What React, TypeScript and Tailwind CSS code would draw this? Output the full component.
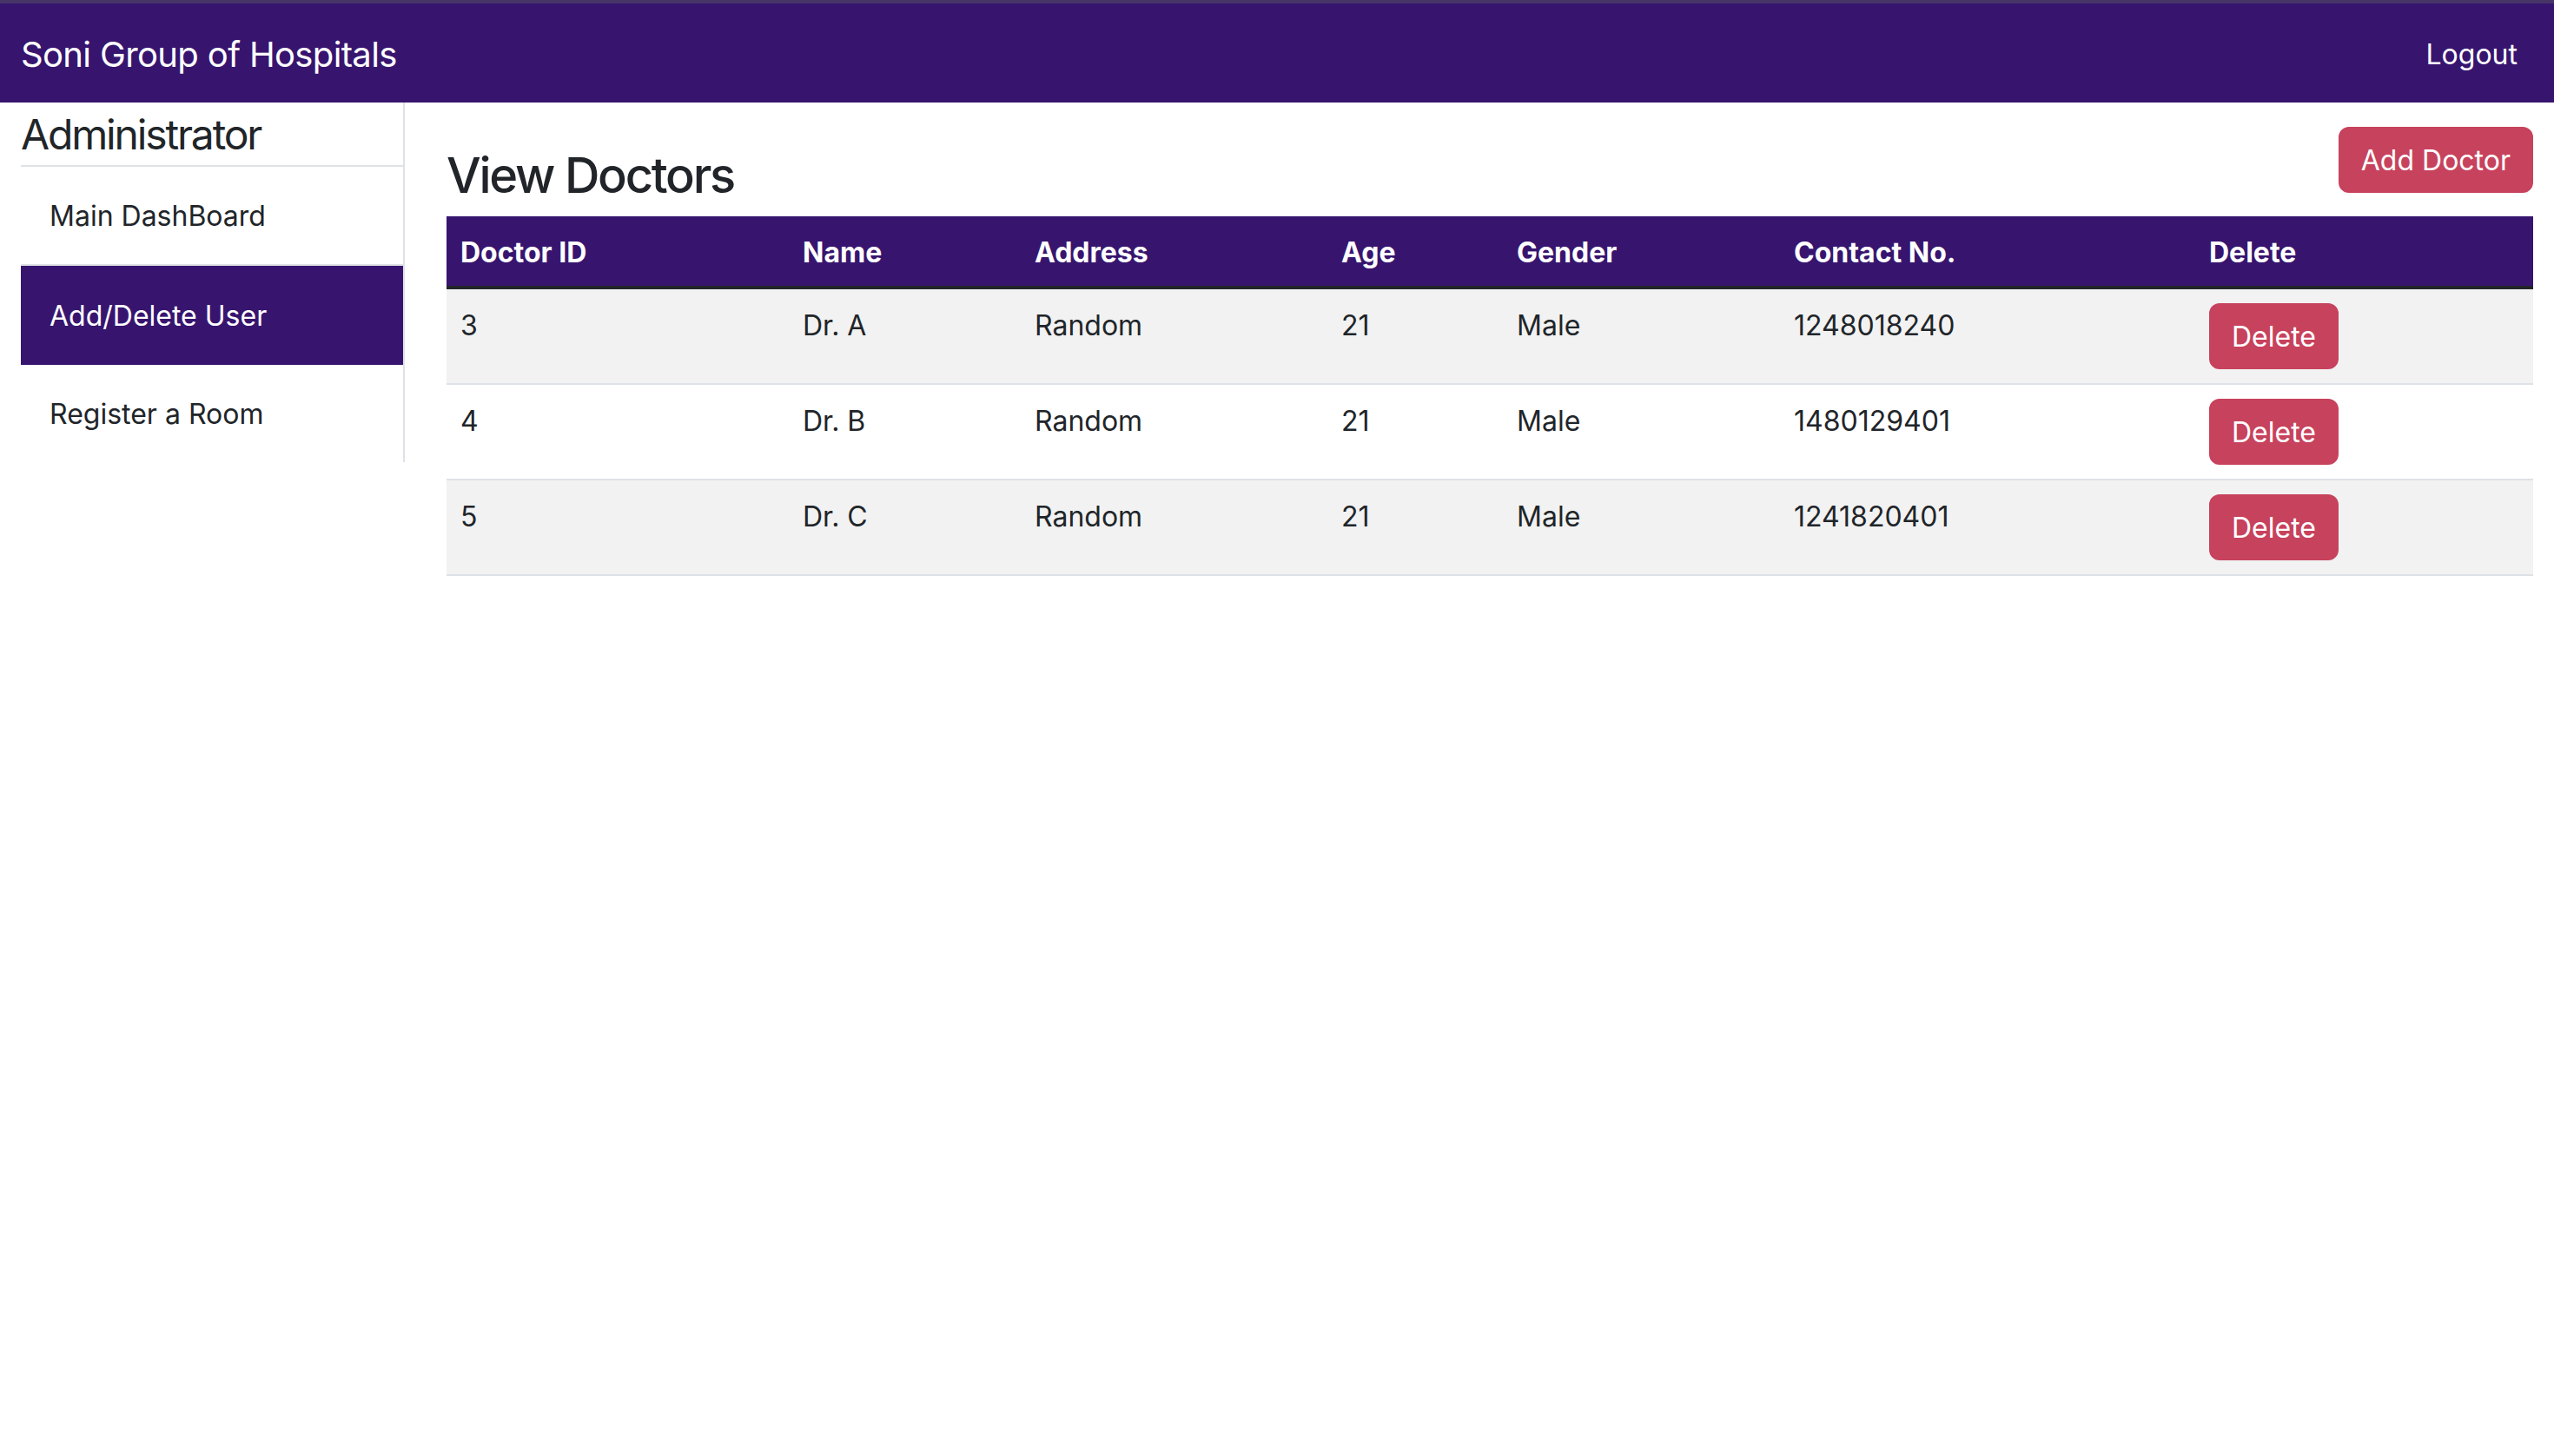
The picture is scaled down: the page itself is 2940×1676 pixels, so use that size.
const doctors = [
  { id: 3, name: "Dr. A", address: "Random", age: 21, gender: "Male", contact: "1248018240" },
  { id: 4, name: "Dr. B", address: "Random", age: 21, gender: "Male", contact: "1480129401" },
  { id: 5, name: "Dr. C", address: "Random", age: 21, gender: "Male", contact: "1241820401" },
];

export default function App() {
  return (
    <div className="min-h-screen bg-white text-[#212529] [font-family:Inter,'Noto_Sans',sans-serif]">
      {/* window edge */}
      <div className="h-[4px] bg-[#463566]" />

      {/* Navbar */}
      <nav className="flex h-[114px] items-center justify-between bg-[#37156f] pl-[24px] pr-[42px] pt-[3px]">
        <span className="text-[40px] leading-[60px] tracking-[-0.016em] text-white">Soni Group of Hospitals</span>
        <a href="#" className="text-[32px] leading-[48px] text-white">
          Logout
        </a>
      </nav>

      <div className="flex items-start gap-[48px] px-[24px]">
        {/* Sidebar */}
        <aside className="w-[442px] shrink-0 border-r-2 border-[#dee2e6]">
          <h4 className="border-b-2 border-[#dee2e6] pt-[8px] pb-[6px] text-[48px] leading-[58px] tracking-[-0.045em]">
            Administrator
          </h4>
          <a href="#" className="flex h-[114px] items-center border-b-2 border-[#dee2e6] pl-[33px] pt-[2px] text-[32px] leading-[48px]">
            Main DashBoard
          </a>
          <a href="#" className="flex h-[114px] items-center bg-[#37156f] pl-[33px] pt-[2px] text-[32px] leading-[48px] text-white">
            Add/Delete User
          </a>
          <a href="#" className="flex h-[112px] items-center pl-[33px] pt-[2px] text-[32px] leading-[48px]">
            Register a Room
          </a>
        </aside>

        {/* Main */}
        <main className="flex-1 pt-[28px]">
          <div className="flex items-start justify-between">
            <h3 className="mt-[23px] mb-[-2px] text-[56px] leading-[67px] font-medium tracking-[-0.04em]">View Doctors</h3>
            <button className="h-[76px] rounded-[12px] border-2 border-[#c7425d] bg-[#c7425d] px-[24px] pt-[2px] text-[32px] leading-[48px] text-white">
              Add Doctor
            </button>
          </div>

          <table className="mt-[15px] w-full table-fixed border-separate border-spacing-0 text-left text-[32px] leading-[48px]">
            <thead>
              <tr className="bg-[#37156f] text-white">
                <th className="w-[394px] border-b-4 border-[#212529] px-[16px] pt-[18px] pb-[14px] font-bold">Doctor ID</th>
                <th className="w-[267px] border-b-4 border-[#212529] px-[16px] pt-[18px] pb-[14px] font-bold">Name</th>
                <th className="w-[353px] border-b-4 border-[#212529] px-[16px] pt-[18px] pb-[14px] font-bold">Address</th>
                <th className="w-[202px] border-b-4 border-[#212529] px-[16px] pt-[18px] pb-[14px] font-bold">Age</th>
                <th className="w-[319px] border-b-4 border-[#212529] px-[16px] pt-[18px] pb-[14px] font-bold">Gender</th>
                <th className="w-[478px] border-b-4 border-[#212529] px-[16px] pt-[18px] pb-[14px] font-bold">Contact No.</th>
                <th className="border-b-4 border-[#212529] px-[16px] pt-[18px] pb-[14px] font-bold">Delete</th>
              </tr>
            </thead>
            <tbody>
              {doctors.map((d, i) => (
                <tr key={d.id} className={i % 2 === 0 ? "bg-[#f2f2f2]" : "bg-white"}>
                  <td className="border-b-2 border-[#dee2e6] px-[16px] pt-[18px] pb-[14px] align-top">{d.id}</td>
                  <td className="border-b-2 border-[#dee2e6] px-[16px] pt-[18px] pb-[14px] align-top">{d.name}</td>
                  <td className="border-b-2 border-[#dee2e6] px-[16px] pt-[18px] pb-[14px] align-top">{d.address}</td>
                  <td className="border-b-2 border-[#dee2e6] px-[16px] pt-[18px] pb-[14px] align-top">{d.age}</td>
                  <td className="border-b-2 border-[#dee2e6] px-[16px] pt-[18px] pb-[14px] align-top">{d.gender}</td>
                  <td className="border-b-2 border-[#dee2e6] px-[16px] pt-[18px] pb-[14px] align-top">{d.contact}</td>
                  <td className="border-b-2 border-[#dee2e6] p-[16px] align-top">
                    <button className="block h-[76px] rounded-[12px] border-2 border-[#c7425d] bg-[#c7425d] px-[24px] pt-[2px] text-[32px] leading-[48px] text-white">
                      Delete
                    </button>
                  </td>
                </tr>
              ))}
            </tbody>
          </table>
        </main>
      </div>
    </div>
  );
}
